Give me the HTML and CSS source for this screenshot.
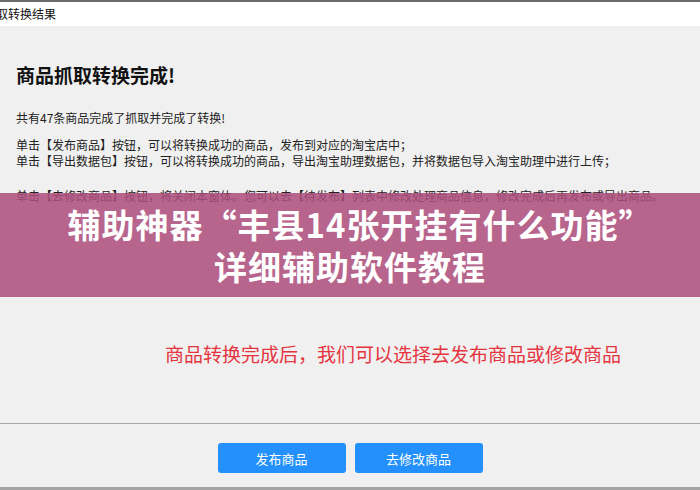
FILE: index.html
```html
<!DOCTYPE html>
<html lang="zh-CN">
<head>
<meta charset="utf-8">
<link rel="stylesheet" href="styles.css">
</head>
<body>
<div class="window">
  <div class="titlebar"><span class="title">取转换结果</span></div>
  <div class="content">
    <div class="main">
      <h1 class="heading">商品抓取转换完成!</h1>
      <p class="summary">共有47条商品完成了抓取并完成了转换!</p>
      <div class="lines">
        <p class="line">单击【发布商品】按钮，可以将转换成功的商品，发布到对应的淘宝店中；</p>
        <p class="line">单击【导出数据包】按钮，可以将转换成功的商品，导出淘宝助理数据包，并将数据包导入淘宝助理中进行上传；</p>
      </div>
      <p class="line line-third">单击【去修改商品】按钮，将关闭本窗体。您可以去【待发布】列表中修改处理商品信息，修改完成后再发布或导出商品。</p>
      <p class="note">商品转换完成后，我们可以选择去发布商品或修改商品</p>
    </div>
    <div class="footer">
      <button class="btn">发布商品</button>
      <button class="btn">去修改商品</button>
    </div>
  </div>
  <div class="overlay">
    <div class="overlay-line overlay-line-first">辅助神器“丰县14张开挂有什么功能”</div>
    <div class="overlay-line">详细辅助软件教程</div>
  </div>
</div>
</body>
</html>
```
FILE: styles.css
```css
* { box-sizing: border-box; }
html, body {
  margin: 0;
  padding: 0;
  width: 700px;
  height: 490px;
  overflow: hidden;
  background: #f0f0f0;
  font-family: "Noto Sans CJK SC", "Noto Sans", sans-serif;
}
.window {
  position: relative;
  width: 700px;
  height: 490px;
  border-top: 2px solid #6a6a6a;
  display: flex;
  flex-direction: column;
}
.titlebar {
  height: 24px;
  background: #ffffff;
  display: flex;
  align-items: center;
  overflow: hidden;
}
.title {
  margin-left: -4px;
  font-size: 12px;
  color: #111;
  line-height: 16px;
}
.content {
  flex: 1;
  background: #f0f0f0;
  display: flex;
  flex-direction: column;
  border-bottom: 3px solid #a3a3a3;
}
.main {
  padding: 0 16px;
  border-bottom: 1px solid #a8a8a8;
  height: 398px;
}
.heading {
  margin: 37px 0 0 0;
  font-size: 19px;
  line-height: 24px;
  font-weight: 700;
  color: #111;
}
.summary {
  margin: 23px 0 0 0;
  font-size: 12px;
  line-height: 16px;
  color: #222;
}
.lines { margin-top: 11px; }
.line {
  margin: 0;
  font-size: 12px;
  line-height: 16px;
  color: #222;
}
.line-third { margin-top: 19px; }
.note {
  margin: 138px 0 0 0;
  padding-left: 149px;
  font-size: 19px;
  line-height: 24px;
  color: #e5353f;
}
.footer {
  display: flex;
  justify-content: center;
  gap: 9px;
  padding-top: 19px;
}
.btn {
  width: 128px;
  height: 30px;
  border: none;
  border-radius: 3px;
  background: #2390fb;
  color: #fff;
  font-family: "Noto Sans CJK SC", "Noto Sans", sans-serif;
  font-size: 13px;
  padding: 0;
}
.overlay {
  position: absolute;
  left: 0;
  top: 191px;
  width: 700px;
  height: 104px;
  background: rgba(174, 78, 125, 0.86);
  display: flex;
  flex-direction: column;
  align-items: center;
  justify-content: center;
}
.overlay-line {
  color: #fff;
  font-weight: 700;
  font-size: 33px;
  line-height: 42px;
  letter-spacing: 1px;
}
.overlay-line-first { padding-left: 20px; }
```
